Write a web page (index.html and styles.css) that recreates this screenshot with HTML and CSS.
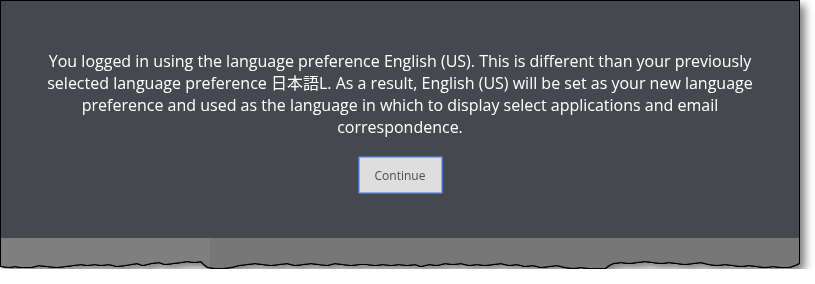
FILE: index.html
```html
<!DOCTYPE html>
<html lang="en">
<head>
<meta charset="utf-8">
<title>Language preference</title>
<link rel="stylesheet" href="styles.css">
</head>
<body>
<div class="shot">
  <div class="frame">
    <div class="dialog">
      <p class="msg">You logged in using the language preference English (US). This is different than your previously selected language preference 日本語L. As a result, English (US) will be set as your new language preference and used as the language in which to display select applications and email correspondence.</p>
      <button class="btn" type="button">Continue</button>
    </div>
    <div class="strip">
      <div class="strip-left"></div>
      <div class="strip-right"></div>
    </div>
  </div>
</div>
</body>
</html>
```
FILE: styles.css
```css
html, body {
  margin: 0;
  padding: 0;
  background: #ffffff;
  overflow: hidden;
}

.shot {
  width: 798px;
  padding: 1px 0 0 1px;
  filter: drop-shadow(1px 0 0 #000) drop-shadow(-1px 0 0 #000) drop-shadow(0 1px 0 #000) drop-shadow(0 -1px 0 #000) drop-shadow(5px 5px 4px rgba(0, 0, 0, 0.5));
}

.frame {
  width: 798px;
  height: 268px;
  display: flex;
  flex-direction: column;
  clip-path: polygon(0 0, 798px 0, 798px 262px, 794px 264px, 788px 266px, 780px 266px, 772px 265px, 764px 266px, 756px 265px, 748px 264px, 740px 265px, 732px 264px, 724px 263px, 716px 264px, 708px 263px, 700px 261px, 692px 262px, 684px 263px, 676px 262px, 668px 261px, 660px 262px, 652px 261px, 644px 260px, 636px 261px, 628px 262px, 620px 261px, 612px 262px, 608px 264px, 604px 267px, 596px 267px, 588px 267px, 580px 266px, 572px 267px, 564px 266px, 556px 264px, 548px 265px, 540px 266px, 532px 264px, 524px 265px, 516px 263px, 508px 264px, 500px 262px, 492px 263px, 484px 264px, 476px 263px, 468px 264px, 460px 262px, 452px 263px, 444px 262px, 436px 264px, 428px 263px, 420px 265px, 414px 263px, 406px 264px, 398px 263px, 390px 264px, 382px 263px, 374px 264px, 366px 263px, 358px 263px, 350px 264px, 342px 263px, 334px 262px, 326px 264px, 318px 263px, 310px 262px, 302px 263px, 294px 264px, 286px 262px, 278px 263px, 270px 264px, 262px 263px, 254px 262px, 246px 263px, 238px 264px, 230px 266px, 222px 267px, 214px 267px, 207px 266px, 203px 263px, 200px 260px, 194px 261px, 186px 260px, 180px 261px, 172px 262px, 164px 263px, 158px 261px, 150px 262px, 142px 264px, 136px 262px, 130px 263px, 124px 264px, 116px 265px, 108px 263px, 100px 264px, 94px 263px, 86px 264px, 80px 263px, 72px 264px, 64px 265px, 56px 266px, 46px 265px, 38px 264px, 30px 266px, 20px 266px, 14px 265px, 8px 266px, 0 265px);
}

.dialog {
  height: 237px;
  flex: none;
  background: #45484d;
  display: flex;
  flex-direction: column;
  align-items: center;
  padding-top: 49px;
  box-sizing: border-box;
}

.msg {
  margin: 0;
  width: 712px;
  text-align: center;
  font-family: "Open Sans", "Noto Sans CJK JP", sans-serif;
  font-size: 16px;
  line-height: 22px;
  color: #ffffff;
}

.btn {
  margin-top: 18px;
  width: 85px;
  height: 38px;
  padding: 0;
  background: #dedede;
  border: 1px solid #4a70bf;
  box-shadow: inset 0 0 0 1px #8ca7d9;
  border-radius: 2px;
  font-family: "Open Sans", sans-serif;
  font-size: 12px;
  color: #4a4d55;
}

.strip {
  flex: 1;
  display: flex;
}

.strip-left {
  width: 209px;
  background: #7f7f7f;
}

.strip-right {
  flex: 1;
  background: #777777;
}
```
